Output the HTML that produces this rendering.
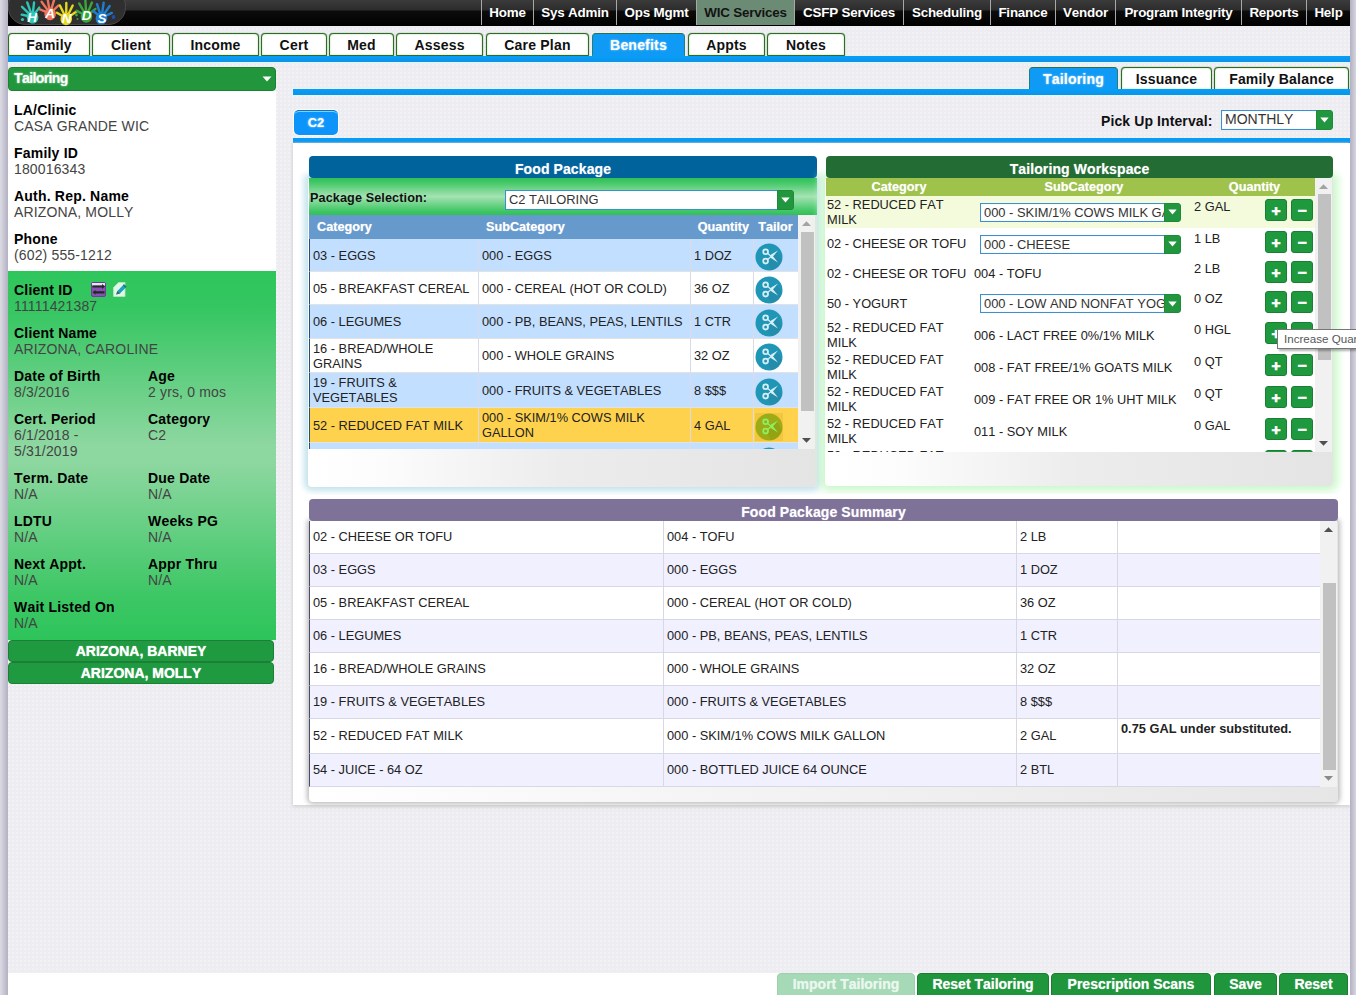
<!DOCTYPE html>
<html lang="en">
<head>
<meta charset="utf-8">
<title>HANDS - Tailoring</title>
<style>
*{box-sizing:border-box}
html,body{margin:0;padding:0}
body{width:1356px;height:995px;overflow:hidden;position:relative;font-family:"Liberation Sans",Arial,sans-serif;font-size:14px;color:#222;font-kerning:none;
background:linear-gradient(to right,#dcdce4 0,#b3b0c3 8px,#b3b0c3 1350px,#d6d6df 1356px)}
#page{position:absolute;left:8px;top:0;width:1342px;height:995px;overflow:hidden;
background-color:#ececf1;
background-image:radial-gradient(circle at 1px 1px,#f1f1f6 0.8px,rgba(241,241,246,0) 1.5px);
background-size:4px 4px}
.abs{position:absolute}
/* top bar */
#topbar{left:0;top:0;width:1342px;height:26px;background:linear-gradient(#3b3b3b 0,#2c2c2c 10px,#0c0c0c 11px,#000 26px)}
#nav{position:absolute;right:0;top:0;height:25px;display:flex}
#nav span{display:block;height:25px;line-height:25px;color:#fff;font-weight:bold;font-size:13.4px;border-left:1px solid #a8a8a8;letter-spacing:-0.2px;text-align:center;white-space:nowrap}
#nav span.on{background:#6c8b74;color:#141414}
/* tabs */
.tab{position:absolute;height:23px;top:33px;border:1px solid #2e6b25;border-radius:4px 4px 0 0;background:#fff;box-shadow:inset 0 0 2px #a9d99a,0 0 1px #2e6b25;font-weight:bold;font-size:14px;color:#111;text-align:center;line-height:23px;letter-spacing:0.2px}
.tab.on{background:#0f9af5;border-color:#23744a #1f7f7a #0f9af5;color:#fff;box-shadow:none;text-shadow:0 0 2px #bfe6ff}
.bline{position:absolute;height:6px;background:linear-gradient(#03a0fb,#1291e6);box-shadow:0 1px 1px #d9fbff}
/* sidebar */
#sbhead{left:0;top:67px;width:268px;height:24px;background:#21963d;border:1px solid #1c8033;border-radius:4px;color:#fff;font-weight:bold;font-size:14px;line-height:20px;padding-left:5px;letter-spacing:-0.6px;text-shadow:0 0 2px #cfeed6}
#sbwhite{left:0;top:91px;width:268px;height:180px;background:#fff}
#sbgreen{left:0;top:271px;width:268px;height:369px;background:linear-gradient(#2ec65c 0,#35c661 10%,#8dd7a0 47%,#8dd7a0 52%,#3dc765 88%,#2dc45a 100%)}
.f{position:absolute;left:6px;line-height:16px;font-size:14px;color:#444;white-space:nowrap;letter-spacing:0.15px}
.f b{display:block;color:#000;letter-spacing:0.2px}
.f.c2{left:140px}
.cbtn{position:absolute;left:0;width:266px;height:22px;background:#1f9a40;border:1px solid #1b7f35;border-radius:4px;color:#fff;font-weight:bold;font-size:14px;text-align:center;line-height:20px;text-shadow:0 0 1px #e8ffe8}
/* main */
.tab.stab{top:67px;height:23px;line-height:22px}
.c2tab{left:286px;top:110px;width:44px;height:25px;background:#0d94fa;border-top:1px solid #0c74c6;border-radius:5px;color:#fff;font-weight:bold;font-size:12.8px;text-align:center;line-height:23px;text-shadow:0 0 2px #bfe6ff;box-shadow:inset 0 1px 0 #7fd4ff,0 0 0 1px rgba(255,255,255,.75)}
.pul{left:1093px;top:112px;font-weight:bold;font-size:14px;color:#111;letter-spacing:0.1px;line-height:18px;white-space:nowrap}
.sel{position:relative;font-size:12.9px;color:#333;line-height:18px;white-space:nowrap}
.st{display:block;position:absolute;left:0;top:0;right:6px;bottom:0;background:#fff;border:1px solid #3f8fd0;padding-left:3px;overflow:hidden;box-shadow:inset 0 0 1px #9cd}
.sel.abs{position:absolute}
.ddb{position:absolute;right:0;top:0;bottom:0;background:#22963e;border:1px solid #1f8a38;border-radius:0 3px 3px 0;display:block}
.ddb svg{position:absolute;left:50%;top:50%;margin:-3px 0 0 -4.5px}
#wc{left:285px;top:143px;width:1057px;height:662px;background:#fff;box-shadow:0 2px 3px #d8d4d4,-1px 0 2px #ddd}
.panel{border-radius:5px 5px 4px 4px;z-index:0}
.panel::before{content:"";position:absolute;left:0;right:0;top:23px;bottom:0;border-radius:0 0 4px 4px;z-index:-1}
.phead{position:relative}
.phead{height:22px;padding-top:2px;border-radius:4px;color:#fff;font-weight:bold;font-size:14px;text-align:center;line-height:23px;letter-spacing:0.1px;text-shadow:0 0 1px rgba(255,255,255,.5)}
#fp{left:300px;top:156px;width:509px;height:331px;padding-left:1px;background:linear-gradient(to right,#fff 0,#fcfcfc 15%,#ececec 50%,#e4e4e4 100%)}
#fp::before{box-shadow:0 0 6px 4px #c4e3ec;clip-path:inset(-20px -20px -8px -20px)}
#tw{left:817px;top:156px;width:508px;height:330px;padding-left:1px;background:linear-gradient(to right,#fff 0,#fcfcfc 15%,#ececec 50%,#e4e4e4 100%)}
#tw::before{box-shadow:0 0 8px 5px #caf8ca;clip-path:inset(-20px -20px -8px -20px)}
#sm{left:301px;top:499px;width:1029px;height:303px;background:linear-gradient(to right,#fff 0,#f4f4f4 40%,#e6e6e6 100%)}
#sm::before{box-shadow:0 0 5px 2px #bcbcbc}
.gstrip{position:relative;height:37px;background:linear-gradient(#2fc057 0,#43c767 12%,#a5e3b3 50%,#43c767 88%,#2fc057 100%)}
.gstrip b{position:absolute;left:1px;top:11.5px;font-size:12.67px;color:#111;line-height:16px;letter-spacing:0.1px}
.tvp{overflow:hidden;width:491px;position:relative}
table{border-collapse:separate;table-layout:fixed;font-size:12.8px;color:#222;line-height:15px}
.fpt{width:489px}
.fpt th{background:#6699cc;color:#fff;height:24px;text-align:left;font-size:12.67px;padding:0;text-shadow:0 0 1px rgba(255,255,255,.6)}
.fpt td{padding:0 2px 0 3px;border-left:1px solid #d9dbe8;border-bottom:1px solid #e2e2e2;vertical-align:middle}
.fpt td:first-child{border-left:1px solid #23507a}
.fpt tr.b td{background:#c3dfff}
.fpt tr.w td{background:#fff}
.fpt tr.y td{background:#ffd24d}
.fpt td.ic{padding:0 0 0 1px}
.sc{display:block;position:relative;top:1.5px}
.vsb{width:17px;background:#f1f1f1}
.twt{width:489px}
.twt th{background:#9ec24b;color:#fff;height:18px;font-size:12.67px;padding:0;text-align:center;line-height:16px;text-shadow:0 0 1px rgba(255,255,255,.6)}
.twt td{padding:0 0 0 1px;vertical-align:middle;background:#fff}
.twt td.s{padding-left:2px}
.twt td.q{vertical-align:top;padding:3px 0 0 4px}
.twt td.b{vertical-align:top;padding:3px 0 0 3px;white-space:nowrap}
.twt tr.hl td{background:#f3fbdc}
.rsel{width:201px;height:19px;margin-left:6px;line-height:17px}
.pm{display:inline-block;width:22px;height:22px;background:#1f993d;border:1px solid #1a7f33;border-radius:3px;color:#fff;font-weight:bold;font-size:15.5px;line-height:22px;-webkit-text-stroke:0.7px #fff;text-align:center;margin-right:4px;vertical-align:top}
.tip{left:1277px;top:329px;width:90px;height:20px;background:#fff;border:1px solid #767676;font-size:11.6px;color:#575757;line-height:18px;padding-left:6px;box-shadow:2px 2px 2px rgba(0,0,0,.3);white-space:nowrap;overflow:hidden}
.smt{width:1011px}
.smt td{padding:0 0 2px 3px;border-left:1px solid #d8d8e4;border-bottom:1px solid #d8d8e4;vertical-align:middle}
.smt td:first-child{border-left:1px solid #4a4a6a}
.smt tr.a td{background:#f0f0ff}
.smt tr td{background:#fff}
.smt td.n{vertical-align:top;padding-top:2px}
.smt td.n b{font-size:12.8px;color:#222}
#bbar{left:0;top:973px;width:1342px;height:22px;background:#fff}
.bbtn{position:absolute;top:973px;height:23px;background:#1f963c;border:1px solid #1a7d32;border-radius:4px 4px 0 0;color:#fff;font-weight:bold;font-size:14px;text-align:center;line-height:21px;text-shadow:0 0 1px rgba(255,255,255,.6);white-space:nowrap}
.bbtn.dis{background:#a6d9b6;border-color:#9fd0ae;color:#e9f7ee}

</style>
</head>
<body>
<div id="page">
<div id="topbar" class="abs"><svg class="abs" style="left:0px;top:-3px" width="120" height="30" viewBox="0 0 120 30">
<rect x="0.5" y="-8" width="117" height="35.5" rx="17" fill="#2f2f2f" stroke="#4a4a4a" stroke-width="1"/>
<g transform="translate(24,18) rotate(-14)" fill="#2cc7b9" stroke="#2cc7b9" stroke-linecap="round"><ellipse cx="0" cy="2.5" rx="5.8" ry="6.2" stroke="none"/><line x1="-4.0" y1="0.0" x2="-9.9" y2="-2.8" stroke-width="2.4"/><line x1="-2.4" y1="-1.8" x2="-7.7" y2="-10.3" stroke-width="2.4"/><line x1="-0.5" y1="-2.5" x2="-1.6" y2="-13.4" stroke-width="2.4"/><line x1="1.5" y1="-2.2" x2="5.0" y2="-11.6" stroke-width="2.4"/><line x1="3.4" y1="-0.9" x2="8.8" y2="-5.4" stroke-width="2.4"/></g>
<g transform="translate(42,14.5) rotate(-4)" fill="#f0745c" stroke="#f0745c" stroke-linecap="round"><ellipse cx="0" cy="2.5" rx="5.8" ry="6.2" stroke="none"/><line x1="-4.0" y1="0.0" x2="-9.9" y2="-2.8" stroke-width="2.4"/><line x1="-2.4" y1="-1.8" x2="-7.7" y2="-10.3" stroke-width="2.4"/><line x1="-0.5" y1="-2.5" x2="-1.6" y2="-13.4" stroke-width="2.4"/><line x1="1.5" y1="-2.2" x2="5.0" y2="-11.6" stroke-width="2.4"/><line x1="3.4" y1="-0.9" x2="8.8" y2="-5.4" stroke-width="2.4"/></g>
<g transform="translate(58.5,19.5) rotate(6)" fill="#e6d81e" stroke="#e6d81e" stroke-linecap="round"><ellipse cx="0" cy="2.5" rx="5.8" ry="6.2" stroke="none"/><line x1="-4.0" y1="0.0" x2="-9.9" y2="-2.8" stroke-width="2.4"/><line x1="-2.4" y1="-1.8" x2="-7.7" y2="-10.3" stroke-width="2.4"/><line x1="-0.5" y1="-2.5" x2="-1.6" y2="-13.4" stroke-width="2.4"/><line x1="1.5" y1="-2.2" x2="5.0" y2="-11.6" stroke-width="2.4"/><line x1="3.4" y1="-0.9" x2="8.8" y2="-5.4" stroke-width="2.4"/></g>
<g transform="translate(78.5,17) rotate(2)" fill="#3aa63c" stroke="#3aa63c" stroke-linecap="round"><ellipse cx="0" cy="2.5" rx="5.8" ry="6.2" stroke="none"/><line x1="-4.0" y1="0.0" x2="-9.9" y2="-2.8" stroke-width="2.4"/><line x1="-2.4" y1="-1.8" x2="-7.7" y2="-10.3" stroke-width="2.4"/><line x1="-0.5" y1="-2.5" x2="-1.6" y2="-13.4" stroke-width="2.4"/><line x1="1.5" y1="-2.2" x2="5.0" y2="-11.6" stroke-width="2.4"/><line x1="3.4" y1="-0.9" x2="8.8" y2="-5.4" stroke-width="2.4"/></g>
<g transform="translate(94,19) rotate(14)" fill="#1f7fcf" stroke="#1f7fcf" stroke-linecap="round"><ellipse cx="0" cy="2.5" rx="5.8" ry="6.2" stroke="none"/><line x1="-4.0" y1="0.0" x2="-9.9" y2="-2.8" stroke-width="2.4"/><line x1="-2.4" y1="-1.8" x2="-7.7" y2="-10.3" stroke-width="2.4"/><line x1="-0.5" y1="-2.5" x2="-1.6" y2="-13.4" stroke-width="2.4"/><line x1="1.5" y1="-2.2" x2="5.0" y2="-11.6" stroke-width="2.4"/><line x1="3.4" y1="-0.9" x2="8.8" y2="-5.4" stroke-width="2.4"/></g>
<circle cx="105.5" cy="20" r="1.9" fill="#1f4fb0"/><circle cx="14.5" cy="22.5" r="1.6" fill="#2cc7b9"/><circle cx="68.5" cy="18" r="1.4" fill="#3aa63c"/><circle cx="69.5" cy="22" r="1" fill="#3aa63c"/>
<text x="24.0" y="24.5" text-anchor="middle" font-family="Liberation Sans,Arial,sans-serif" font-size="13.5" font-weight="bold" font-style="italic" fill="#fff">H</text><text x="42.0" y="20.5" text-anchor="middle" font-family="Liberation Sans,Arial,sans-serif" font-size="13.5" font-weight="bold" font-style="italic" fill="#fff">A</text><text x="58.5" y="26.0" text-anchor="middle" font-family="Liberation Sans,Arial,sans-serif" font-size="13.5" font-weight="bold" font-style="italic" fill="#fff">N</text><text x="78.5" y="23.0" text-anchor="middle" font-family="Liberation Sans,Arial,sans-serif" font-size="13.5" font-weight="bold" font-style="italic" fill="#fff">D</text><text x="94.0" y="25.5" text-anchor="middle" font-family="Liberation Sans,Arial,sans-serif" font-size="13.5" font-weight="bold" font-style="italic" fill="#fff">S</text></svg>
<div id="nav"><span style="width:52px">Home</span>
<span style="width:83px">Sys Admin</span>
<span style="width:80px">Ops Mgmt</span>
<span style="width:98px" class="on">WIC Services</span>
<span style="width:109px">CSFP Services</span>
<span style="width:87px">Scheduling</span>
<span style="width:65px">Finance</span>
<span style="width:60px">Vendor</span>
<span style="width:126px">Program Integrity</span>
<span style="width:65px">Reports</span>
<span style="width:44px">Help</span>
</div></div>
<div class="tab" style="left:0px;width:82px">Family</div>
<div class="tab" style="left:84px;width:78px">Client</div>
<div class="tab" style="left:164px;width:87px">Income</div>
<div class="tab" style="left:253px;width:66px">Cert</div>
<div class="tab" style="left:321px;width:65px">Med</div>
<div class="tab" style="left:388px;width:87px">Assess</div>
<div class="tab" style="left:478px;width:103px">Care Plan</div>
<div class="tab on" style="left:584px;width:93px">Benefits</div>
<div class="tab" style="left:680px;width:77px">Appts</div>
<div class="tab" style="left:759px;width:78px">Notes</div>
<div class="bline" style="left:0;top:56px;width:1342px"></div>
<div id="sbhead" class="abs">Tailoring<svg class="abs" style="right:3px;top:8px" width="10" height="6"><path d="M0.5 0.5h9L5 5.5z" fill="#fff"/></svg></div>
<div id="sbwhite" class="abs">
<div class="f" style="top:11px"><b>LA/Clinic</b>CASA GRANDE WIC</div>
<div class="f" style="top:54px"><b>Family ID</b>180016343</div>
<div class="f" style="top:97px"><b>Auth. Rep. Name</b>ARIZONA, MOLLY</div>
<div class="f" style="top:140px"><b>Phone</b>(602) 555-1212</div>
</div>
<div id="sbgreen" class="abs">
<div class="f" style="top:11px"><b>Client ID</b><span style="letter-spacing:-0.85px">1111</span>1421387</div>
<div class="f" style="top:54px"><b>Client Name</b>ARIZONA, CAROLINE</div>
<div class="f" style="top:97px"><b>Date of Birth</b>8/3/2016</div>
<div class="f c2" style="top:97px"><b>Age</b>2 yrs, 0 mos</div>
<div class="f" style="top:140px"><b>Cert. Period</b>6/1/2018 -<br>5/31/2019</div>
<div class="f c2" style="top:140px"><b>Category</b>C2</div>
<div class="f" style="top:199px"><b>Term. Date</b>N/A</div>
<div class="f c2" style="top:199px"><b>Due Date</b>N/A</div>
<div class="f" style="top:242px"><b>LDTU</b>N/A</div>
<div class="f c2" style="top:242px"><b>Weeks PG</b>N/A</div>
<div class="f" style="top:285px"><b>Next Appt.</b>N/A</div>
<div class="f c2" style="top:285px"><b>Appr Thru</b>N/A</div>
<div class="f" style="top:328px"><b>Wait Listed On</b>N/A</div>
<svg class="abs" style="left:83px;top:11px" width="15" height="15" viewBox="0 0 15 15"><rect x="0.5" y="0.5" width="14" height="14" rx="1.5" fill="#8a4fb5" stroke="#6b3f90"/><rect x="1" y="1" width="13" height="2.6" fill="#e9e2f1"/><path d="M1.5 3.4h9.5v-1.3l3 2.4-3 2.4v-1.3H1.5z" fill="#1d2a22"/><path d="M13.5 9.2H4.5v-1.3l-3 2.4 3 2.4v-1.3h9z" fill="#1d2a22"/></svg>
<svg class="abs" style="left:105px;top:11px" width="15" height="15" viewBox="0 0 15 15"><path d="M0.5 14.5V5.5L5.5 0.5h6.5v14z" fill="#dff7e4" stroke="#b5e6c0" stroke-width="0.8"/><path d="M3.2 12.6l1.2-3.6 6.6-6.8 2.6 2.6-6.6 6.8z" fill="#1f9fc4"/><path d="M3.2 12.6l1.2-3.6 2.6 2.6z" fill="#4a6a4a"/><path d="M9.8 3.4l1.2-1.2 2.6 2.6-1.2 1.2z" fill="#2c7a62"/></svg>
</div>
<div class="cbtn" style="top:640px">ARIZONA, BARNEY</div>
<div class="cbtn" style="top:662px">ARIZONA, MOLLY</div>
<div class="tab stab on" style="left:1021px;width:89px">Tailoring</div>
<div class="tab stab" style="left:1113px;width:91px">Issuance</div>
<div class="tab stab" style="left:1206px;width:135px">Family Balance</div>
<div class="bline" style="left:285px;top:89px;width:1057px"></div>
<div class="c2tab abs">C2</div>
<div class="abs pul">Pick Up Interval:</div>
<div class="sel abs" style="left:1213px;top:110px;width:112px;height:20px;font-size:14px;line-height:17px"><span class="st">MONTHLY</span><span class="ddb" style="width:17px"><svg width="9" height="6" viewBox="0 0 9 6"><path d="M0.3 0.5h8.4L4.5 5.6z" fill="#fff"/></svg></span></div>
<div class="bline" style="left:285px;top:138px;width:1057px;height:5px"></div>
<div id="wc" class="abs"></div>
<div id="fp" class="abs panel">
<div class="phead" style="background:#00639c">Food Package</div>
<div class="gstrip"><b>Package Selection:</b><div class="sel abs" style="left:196px;top:12px;width:289px;height:20px"><span class="st">C2 TAILORING</span><span class="ddb" style="width:17px"><svg width="9" height="6" viewBox="0 0 9 6"><path d="M0.3 0.5h8.4L4.5 5.6z" fill="#fff"/></svg></span></div></div>
<div class="tvp" style="height:234px">
<table class="fpt" cellspacing="0"><colgroup><col style="width:169px"><col style="width:212px"><col style="width:63px"><col style="width:45px"></colgroup>
<tr class="h"><th style="padding-left:8px">Category</th><th style="padding-left:8px">SubCategory</th><th style="text-align:right;padding-right:4px">Quantity</th><th style="text-align:center">Tailor</th></tr>
<tr class="b" style="height:33px"><td>03 - EGGS</td><td>000 - EGGS</td><td>1 DOZ</td><td class="ic"><svg class="sc" width="28" height="28" viewBox="0 0 28 28"><circle cx="14" cy="14" r="13.5" fill="#2096b7"/><path d="M12 20 L22 9 L26.8 17 A13.5 13.5 0 0 1 16 27.3 Z" fill="#2a87a4" opacity=".55"/><g fill="none" stroke="#d6eef6" stroke-width="1.8"><circle cx="10.6" cy="8.7" r="2.4"/><circle cx="10.6" cy="18.1" r="2.4"/></g><path d="M12.56 9.59 L15.83 12.37 L17.95 13.21 L23.00 19.40 L16.17 15.25 L15.05 13.27 L11.84 10.41 Z M11.84 16.39 L15.05 13.53 L16.17 11.55 L23.00 7.40 L17.95 13.59 L15.83 14.43 L12.56 17.21 Z" fill="#d6eef6"/></svg></td></tr>
<tr class="w" style="height:33px"><td>05 - BREAKFAST CEREAL</td><td>000 - CEREAL (HOT OR COLD)</td><td>36 OZ</td><td class="ic"><svg class="sc" width="28" height="28" viewBox="0 0 28 28"><circle cx="14" cy="14" r="13.5" fill="#2096b7"/><path d="M12 20 L22 9 L26.8 17 A13.5 13.5 0 0 1 16 27.3 Z" fill="#2a87a4" opacity=".55"/><g fill="none" stroke="#d6eef6" stroke-width="1.8"><circle cx="10.6" cy="8.7" r="2.4"/><circle cx="10.6" cy="18.1" r="2.4"/></g><path d="M12.56 9.59 L15.83 12.37 L17.95 13.21 L23.00 19.40 L16.17 15.25 L15.05 13.27 L11.84 10.41 Z M11.84 16.39 L15.05 13.53 L16.17 11.55 L23.00 7.40 L17.95 13.59 L15.83 14.43 L12.56 17.21 Z" fill="#d6eef6"/></svg></td></tr>
<tr class="b" style="height:34px"><td>06 - LEGUMES</td><td>000 - PB, BEANS, PEAS, LENTILS</td><td>1 CTR</td><td class="ic"><svg class="sc" width="28" height="28" viewBox="0 0 28 28"><circle cx="14" cy="14" r="13.5" fill="#2096b7"/><path d="M12 20 L22 9 L26.8 17 A13.5 13.5 0 0 1 16 27.3 Z" fill="#2a87a4" opacity=".55"/><g fill="none" stroke="#d6eef6" stroke-width="1.8"><circle cx="10.6" cy="8.7" r="2.4"/><circle cx="10.6" cy="18.1" r="2.4"/></g><path d="M12.56 9.59 L15.83 12.37 L17.95 13.21 L23.00 19.40 L16.17 15.25 L15.05 13.27 L11.84 10.41 Z M11.84 16.39 L15.05 13.53 L16.17 11.55 L23.00 7.40 L17.95 13.59 L15.83 14.43 L12.56 17.21 Z" fill="#d6eef6"/></svg></td></tr>
<tr class="w" style="height:34px"><td>16 - BREAD/WHOLE GRAINS</td><td>000 - WHOLE GRAINS</td><td>32 OZ</td><td class="ic"><svg class="sc" width="28" height="28" viewBox="0 0 28 28"><circle cx="14" cy="14" r="13.5" fill="#2096b7"/><path d="M12 20 L22 9 L26.8 17 A13.5 13.5 0 0 1 16 27.3 Z" fill="#2a87a4" opacity=".55"/><g fill="none" stroke="#d6eef6" stroke-width="1.8"><circle cx="10.6" cy="8.7" r="2.4"/><circle cx="10.6" cy="18.1" r="2.4"/></g><path d="M12.56 9.59 L15.83 12.37 L17.95 13.21 L23.00 19.40 L16.17 15.25 L15.05 13.27 L11.84 10.41 Z M11.84 16.39 L15.05 13.53 L16.17 11.55 L23.00 7.40 L17.95 13.59 L15.83 14.43 L12.56 17.21 Z" fill="#d6eef6"/></svg></td></tr>
<tr class="b" style="height:35px"><td>19 - FRUITS &amp; VEGETABLES</td><td>000 - FRUITS &amp; VEGETABLES</td><td>8 $$$</td><td class="ic"><svg class="sc" width="28" height="28" viewBox="0 0 28 28"><circle cx="14" cy="14" r="13.5" fill="#2096b7"/><path d="M12 20 L22 9 L26.8 17 A13.5 13.5 0 0 1 16 27.3 Z" fill="#2a87a4" opacity=".55"/><g fill="none" stroke="#d6eef6" stroke-width="1.8"><circle cx="10.6" cy="8.7" r="2.4"/><circle cx="10.6" cy="18.1" r="2.4"/></g><path d="M12.56 9.59 L15.83 12.37 L17.95 13.21 L23.00 19.40 L16.17 15.25 L15.05 13.27 L11.84 10.41 Z M11.84 16.39 L15.05 13.53 L16.17 11.55 L23.00 7.40 L17.95 13.59 L15.83 14.43 L12.56 17.21 Z" fill="#d6eef6"/></svg></td></tr>
<tr class="y" style="height:35px"><td>52 - REDUCED FAT MILK</td><td>000 - SKIM/1% COWS MILK GALLON</td><td>4 GAL</td><td class="ic"><svg class="sc" width="28" height="28" viewBox="0 0 28 28"><rect x="0" y="0" width="28" height="28" fill="#f2c63e"/><circle cx="14" cy="14" r="13.5" fill="#9cab16"/><path d="M12 20 L22 9 L26.8 17 A13.5 13.5 0 0 1 16 27.3 Z" fill="#8f9f12" opacity=".6"/><g fill="none" stroke="#8cf060" stroke-width="1.8"><circle cx="10.6" cy="8.7" r="2.4"/><circle cx="10.6" cy="18.1" r="2.4"/></g><path d="M12.56 9.59 L15.83 12.37 L17.95 13.21 L23.00 19.40 L16.17 15.25 L15.05 13.27 L11.84 10.41 Z M11.84 16.39 L15.05 13.53 L16.17 11.55 L23.00 7.40 L17.95 13.59 L15.83 14.43 L12.56 17.21 Z" fill="#8cf060"/></svg></td></tr>
<tr class="b" style="height:33px"><td>54 - JUICE - 64 OZ</td><td>000 - BOTTLED JUICE 64 OUNCE</td><td>2 BTL</td><td class="ic"><svg class="sc" width="28" height="28" viewBox="0 0 28 28"><circle cx="14" cy="14" r="13.5" fill="#2096b7"/><path d="M12 20 L22 9 L26.8 17 A13.5 13.5 0 0 1 16 27.3 Z" fill="#2a87a4" opacity=".55"/><g fill="none" stroke="#d6eef6" stroke-width="1.8"><circle cx="10.6" cy="8.7" r="2.4"/><circle cx="10.6" cy="18.1" r="2.4"/></g><path d="M12.56 9.59 L15.83 12.37 L17.95 13.21 L23.00 19.40 L16.17 15.25 L15.05 13.27 L11.84 10.41 Z M11.84 16.39 L15.05 13.53 L16.17 11.55 L23.00 7.40 L17.95 13.59 L15.83 14.43 L12.56 17.21 Z" fill="#d6eef6"/></svg></td></tr>
</table>
</div>
<div class="vsb abs" style="left:490px;top:59px;height:234px"><svg class="abs" style="left:4px;top:6px" width="9" height="5"><path d="M0 5L4.5 0.3L9 5z" fill="#a3a3a3"/></svg><svg class="abs" style="left:4px;bottom:6px" width="9" height="5"><path d="M0 0L4.5 4.7L9 0z" fill="#505050"/></svg><div class="abs" style="left:3px;width:13px;top:17px;height:179px;background:#c1c1c1"></div></div>
</div>
<div id="tw" class="abs panel">
<div class="phead" style="background:#236c33">Tailoring Workspace</div>
<div class="tvp" style="height:274px;width:489px">
<table class="twt" cellspacing="0"><colgroup><col style="width:146px"><col style="width:218px"><col style="width:72px"><col style="width:53px"></colgroup>
<tr class="h"><th>Category</th><th style="padding-left:6px">SubCategory</th><th colspan="2" style="padding-left:4px">Quantity</th></tr>
<tr class="hl" style="height:32px"><td>52 - REDUCED FAT MILK</td><td class="s"><div class="sel rsel"><span class="st">000 - SKIM/1% COWS MILK GALLON</span><span class="ddb" style="width:17px"><svg width="9" height="6" viewBox="0 0 9 6"><path d="M0.3 0.5h8.4L4.5 5.6z" fill="#fff"/></svg></span></div></td><td class="q">2 GAL</td><td class="b"><span class="pm">+</span><span class="pm">&minus;</span></td></tr>
<tr class="" style="height:30px"><td>02 - CHEESE OR TOFU</td><td class="s"><div class="sel rsel" style="top:1px"><span class="st">000 - CHEESE</span><span class="ddb" style="width:17px"><svg width="9" height="6" viewBox="0 0 9 6"><path d="M0.3 0.5h8.4L4.5 5.6z" fill="#fff"/></svg></span></div></td><td class="q">1 LB</td><td class="b"><span class="pm">+</span><span class="pm">&minus;</span></td></tr>
<tr class="" style="height:30px"><td>02 - CHEESE OR TOFU</td><td class="s">004 - TOFU</td><td class="q">2 LB</td><td class="b"><span class="pm">+</span><span class="pm">&minus;</span></td></tr>
<tr class="" style="height:31px"><td>50 - YOGURT</td><td class="s"><div class="sel rsel"><span class="st">000 - LOW AND NONFAT YOGURT</span><span class="ddb" style="width:17px"><svg width="9" height="6" viewBox="0 0 9 6"><path d="M0.3 0.5h8.4L4.5 5.6z" fill="#fff"/></svg></span></div></td><td class="q">0 OZ</td><td class="b"><span class="pm">+</span><span class="pm">&minus;</span></td></tr>
<tr class="" style="height:32px"><td>52 - REDUCED FAT MILK</td><td class="s">006 - LACT FREE 0%/1% MILK</td><td class="q">0 HGL</td><td class="b"><span class="pm">+</span><span class="pm">&minus;</span></td></tr>
<tr class="" style="height:32px"><td>52 - REDUCED FAT MILK</td><td class="s">008 - FAT FREE/1% GOATS MILK</td><td class="q">0 QT</td><td class="b"><span class="pm">+</span><span class="pm">&minus;</span></td></tr>
<tr class="" style="height:32px"><td>52 - REDUCED FAT MILK</td><td class="s">009 - FAT FREE OR 1% UHT MILK</td><td class="q">0 QT</td><td class="b"><span class="pm">+</span><span class="pm">&minus;</span></td></tr>
<tr class="" style="height:32px"><td>52 - REDUCED FAT MILK</td><td class="s">011 - SOY MILK</td><td class="q">0 GAL</td><td class="b"><span class="pm">+</span><span class="pm">&minus;</span></td></tr>
<tr class="" style="height:32px"><td>52 - REDUCED FAT MILK</td><td class="s">012 - EVAPORATED MILK</td><td class="q"></td><td class="b"><span class="pm">+</span><span class="pm">&minus;</span></td></tr>
</table>
</div>
<div class="vsb abs" style="left:490px;top:22px;height:274px"><svg class="abs" style="left:4px;top:6px" width="9" height="5"><path d="M0 5L4.5 0.3L9 5z" fill="#a3a3a3"/></svg><svg class="abs" style="left:4px;bottom:6px" width="9" height="5"><path d="M0 0L4.5 4.7L9 0z" fill="#505050"/></svg><div class="abs" style="left:3px;width:13px;top:16px;height:166px;background:#c1c1c1"></div></div>
</div>
<div id="sm" class="abs panel">
<div class="phead" style="background:#7f7299">Food Package Summary</div>
<div class="tvp" style="height:266px;width:1011px">
<table class="smt" cellspacing="0"><colgroup><col style="width:354px"><col style="width:353px"><col style="width:101px"><col style="width:203px"></colgroup>
<tr class="" style="height:33px"><td>02 - CHEESE OR TOFU</td><td>004 - TOFU</td><td>2 LB</td><td class="n"></td></tr>
<tr class="a" style="height:33px"><td>03 - EGGS</td><td>000 - EGGS</td><td>1 DOZ</td><td class="n"></td></tr>
<tr class="" style="height:33px"><td>05 - BREAKFAST CEREAL</td><td>000 - CEREAL (HOT OR COLD)</td><td>36 OZ</td><td class="n"></td></tr>
<tr class="a" style="height:33px"><td>06 - LEGUMES</td><td>000 - PB, BEANS, PEAS, LENTILS</td><td>1 CTR</td><td class="n"></td></tr>
<tr class="" style="height:33px"><td>16 - BREAD/WHOLE GRAINS</td><td>000 - WHOLE GRAINS</td><td>32 OZ</td><td class="n"></td></tr>
<tr class="a" style="height:33px"><td>19 - FRUITS &amp; VEGETABLES</td><td>000 - FRUITS &amp; VEGETABLES</td><td>8 $$$</td><td class="n"></td></tr>
<tr class="" style="height:35px"><td>52 - REDUCED FAT MILK</td><td>000 - SKIM/1% COWS MILK GALLON</td><td>2 GAL</td><td class="n"><b>0.75 GAL under substituted.</b></td></tr>
<tr class="a" style="height:33px"><td>54 - JUICE - 64 OZ</td><td>000 - BOTTLED JUICE 64 OUNCE</td><td>2 BTL</td><td class="n"></td></tr>
</table>
</div>
<div class="vsb abs" style="left:1011px;top:22px;height:266px"><svg class="abs" style="left:4px;top:6px" width="9" height="5"><path d="M0 5L4.5 0.3L9 5z" fill="#505050"/></svg><svg class="abs" style="left:4px;bottom:6px" width="9" height="5"><path d="M0 0L4.5 4.7L9 0z" fill="#8a8a8a"/></svg><div class="abs" style="left:3px;width:13px;top:62px;height:187px;background:#c1c1c1"></div></div>
</div>
<div id="bbar" class="abs"></div>
<div class="bbtn dis" style="left:769px;width:138px">Import Tailoring</div>
<div class="bbtn" style="left:909px;width:132px">Reset Tailoring</div>
<div class="bbtn" style="left:1043px;width:160px">Prescription Scans</div>
<div class="bbtn" style="left:1206px;width:63px">Save</div>
<div class="bbtn" style="left:1271px;width:69px">Reset</div>

</div>
<div class="tip abs">Increase Quantity</div>
</body>
</html>
